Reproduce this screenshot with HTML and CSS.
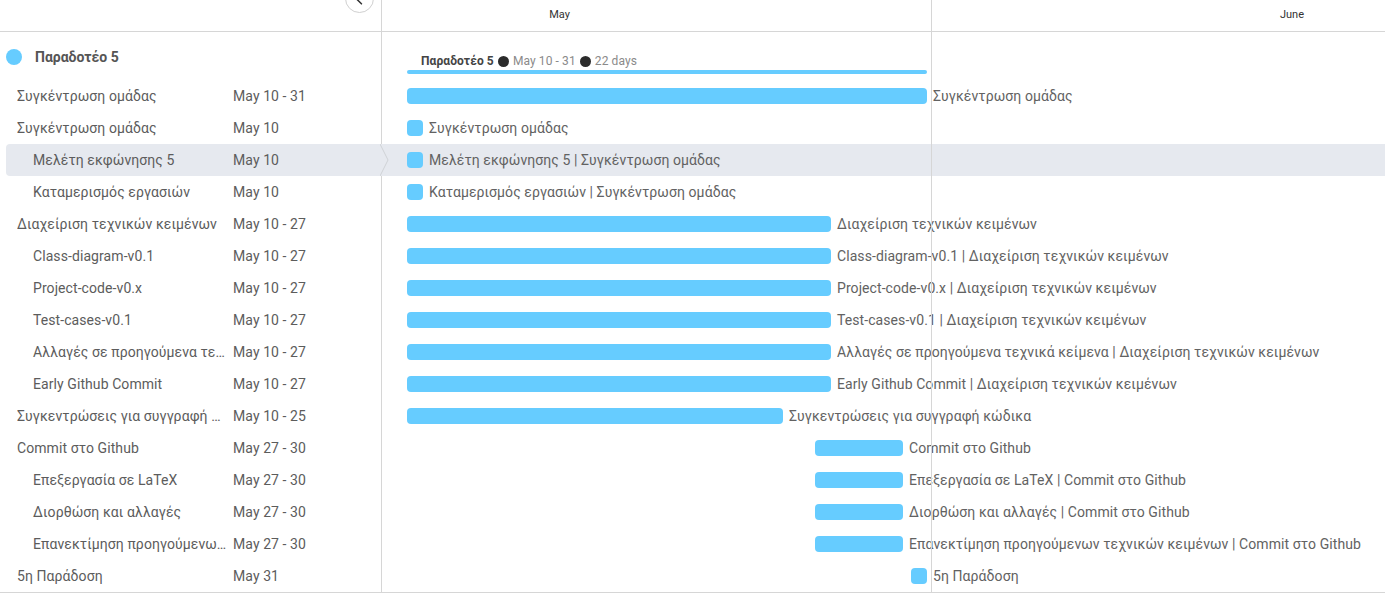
FILE: index.html
```html
<!DOCTYPE html>
<html lang="el">
<head>
<meta charset="utf-8">
<title>Gantt</title>
<link rel="stylesheet" href="styles.css">
</head>
<body>
<div class="gantt">
  <div class="header">
    <div class="header-left">
      <button class="collapse" aria-label="collapse">
        <svg width="28" height="28" viewBox="0 0 28 28"><polyline points="16,9 11,14 16,19" fill="none" stroke="#333" stroke-width="1.6" stroke-linecap="round" stroke-linejoin="round"/></svg>
      </button>
    </div>
    <div class="header-chart">
      <div class="months">
        <div class="month may">May</div>
        <div class="month june">June</div>
      </div>
    </div>
  </div>

  <div class="rows">
    <div class="row group">
      <div class="cell-left"><span class="dot"></span><span class="group-title">Παραδοτέο 5</span></div>
      <div class="cell-chart group-chart" style="padding-left:25px">
        <div class="summary"><b>Παραδοτέο 5</b> <span class="sep"></span> May 10 - 31 <span class="sep"></span> 22 days</div>
        <div class="summary-bar" style="width:520px"></div>
      </div>
    </div>

    <div class="row">
      <div class="cell-left"><span class="name">Συγκέντρωση ομάδας</span><span class="date">May 10 - 31</span></div>
      <div class="cell-chart" style="padding-left:25px"><span class="bar" style="width:520px"></span><span class="label">Συγκέντρωση ομάδας</span></div>
    </div>
    <div class="row">
      <div class="cell-left"><span class="name">Συγκέντρωση ομάδας</span><span class="date">May 10</span></div>
      <div class="cell-chart" style="padding-left:25px"><span class="milestone"></span><span class="label">Συγκέντρωση ομάδας</span></div>
    </div>
    <div class="row active">
      <div class="cell-left"><span class="name sub">Μελέτη εκφώνησης 5</span><span class="date">May 10</span>
        <svg class="pointer" width="10" height="32" viewBox="0 0 10 32"><polyline points="0,0 8,16 0,32" fill="none" stroke="#cfd2d6" stroke-width="1"/></svg>
      </div>
      <div class="cell-chart" style="padding-left:25px"><span class="milestone"></span><span class="label">Μελέτη εκφώνησης 5 | Συγκέντρωση ομάδας</span></div>
    </div>
    <div class="row">
      <div class="cell-left"><span class="name sub">Καταμερισμός εργασιών</span><span class="date">May 10</span></div>
      <div class="cell-chart" style="padding-left:25px"><span class="milestone"></span><span class="label">Καταμερισμός εργασιών | Συγκέντρωση ομάδας</span></div>
    </div>
    <div class="row">
      <div class="cell-left"><span class="name">Διαχείριση τεχνικών κειμένων</span><span class="date">May 10 - 27</span></div>
      <div class="cell-chart" style="padding-left:25px"><span class="bar" style="width:424px"></span><span class="label">Διαχείριση τεχνικών κειμένων</span></div>
    </div>
    <div class="row">
      <div class="cell-left"><span class="name sub">Class-diagram-v0.1</span><span class="date">May 10 - 27</span></div>
      <div class="cell-chart" style="padding-left:25px"><span class="bar" style="width:424px"></span><span class="label">Class-diagram-v0.1 | Διαχείριση τεχνικών κειμένων</span></div>
    </div>
    <div class="row">
      <div class="cell-left"><span class="name sub">Project-code-v0.x</span><span class="date">May 10 - 27</span></div>
      <div class="cell-chart" style="padding-left:25px"><span class="bar" style="width:424px"></span><span class="label">Project-code-v0.x | Διαχείριση τεχνικών κειμένων</span></div>
    </div>
    <div class="row">
      <div class="cell-left"><span class="name sub">Test-cases-v0.1</span><span class="date">May 10 - 27</span></div>
      <div class="cell-chart" style="padding-left:25px"><span class="bar" style="width:424px"></span><span class="label">Test-cases-v0.1 | Διαχείριση τεχνικών κειμένων</span></div>
    </div>
    <div class="row">
      <div class="cell-left"><span class="name sub">Αλλαγές σε προηγούμενα τεχνικά κείμενα</span><span class="date">May 10 - 27</span></div>
      <div class="cell-chart" style="padding-left:25px"><span class="bar" style="width:424px"></span><span class="label">Αλλαγές σε προηγούμενα τεχνικά κείμενα | Διαχείριση τεχνικών κειμένων</span></div>
    </div>
    <div class="row">
      <div class="cell-left"><span class="name sub">Early Github Commit</span><span class="date">May 10 - 27</span></div>
      <div class="cell-chart" style="padding-left:25px"><span class="bar" style="width:424px"></span><span class="label">Early Github Commit | Διαχείριση τεχνικών κειμένων</span></div>
    </div>
    <div class="row">
      <div class="cell-left"><span class="name">Συγκεντρώσεις για συγγραφή κώδικα</span><span class="date">May 10 - 25</span></div>
      <div class="cell-chart" style="padding-left:25px"><span class="bar" style="width:376px"></span><span class="label">Συγκεντρώσεις για συγγραφή κώδικα</span></div>
    </div>
    <div class="row">
      <div class="cell-left"><span class="name">Commit στο Github</span><span class="date">May 27 - 30</span></div>
      <div class="cell-chart" style="padding-left:433px"><span class="bar" style="width:88px"></span><span class="label">Commit στο Github</span></div>
    </div>
    <div class="row">
      <div class="cell-left"><span class="name sub">Επεξεργασία σε LaTeX</span><span class="date">May 27 - 30</span></div>
      <div class="cell-chart" style="padding-left:433px"><span class="bar" style="width:88px"></span><span class="label">Επεξεργασία σε LaTeX | Commit στο Github</span></div>
    </div>
    <div class="row">
      <div class="cell-left"><span class="name sub">Διορθώση και αλλαγές</span><span class="date">May 27 - 30</span></div>
      <div class="cell-chart" style="padding-left:433px"><span class="bar" style="width:88px"></span><span class="label">Διορθώση και αλλαγές | Commit στο Github</span></div>
    </div>
    <div class="row">
      <div class="cell-left"><span class="name sub">Επανεκτίμηση προηγούμενων τεχνικών κειμένων</span><span class="date">May 27 - 30</span></div>
      <div class="cell-chart" style="padding-left:433px"><span class="bar" style="width:88px"></span><span class="label">Επανεκτίμηση προηγούμενων τεχνικών κειμένων | Commit στο Github</span></div>
    </div>
    <div class="row">
      <div class="cell-left"><span class="name">5η Παράδοση</span><span class="date">May 31</span></div>
      <div class="cell-chart" style="padding-left:529px"><span class="milestone"></span><span class="label">5η Παράδοση</span></div>
    </div>
  </div>
</div>
</body>
</html>
```

FILE: styles.css
```css
* { box-sizing: border-box; }

html, body {
  margin: 0;
  padding: 0;
  background: #fff;
}

body {
  font-family: Roboto, "Noto Sans", "DejaVu Sans", sans-serif;
  font-size: 14px;
  font-weight: 400;
  letter-spacing: 0.08px;
  color: #5c5c5c;
  overflow: hidden;
  width: 1385px;
  height: 594px;
}

.gantt {
  position: relative;
  width: 1385px;
}

/* header */
.header {
  display: flex;
  height: 32px;
  border-bottom: 1px solid #d6d6d6;
}

.header-left {
  position: relative;
  width: 382px;
  flex: none;
  border-right: 1px solid #d6d6d6;
}

.collapse {
  position: absolute;
  left: 345px;
  top: -16px;
  width: 29px;
  height: 29px;
  padding: 0;
  margin: 0;
  border: 1px solid #d0d0d0;
  border-radius: 50%;
  background: #fff;
  display: flex;
  align-items: center;
  justify-content: center;
}

.collapse svg { display: block; }

.header-chart {
  flex: 1;
  overflow: hidden;
}

.months {
  display: flex;
  margin-left: -194px;
  height: 100%;
}

.month {
  flex: none;
  display: flex;
  align-items: center;
  justify-content: center;
  font-size: 11px;
  letter-spacing: 0;
  color: #333;
  padding-bottom: 3px;
}

.month.may {
  width: 744px;
  border-right: 1px solid #d6d6d6;
}

.month.june {
  width: 720px;
}

/* rows */
.rows {
  position: relative;
  border-bottom: 1px solid #d6d6d6;
}

.rows::after {
  content: "";
  position: absolute;
  left: 931px;
  top: 0;
  bottom: 0;
  width: 1px;
  background: #d6d6d6;
}

.row {
  display: flex;
  height: 32px;
  margin-left: 6px;
}

.row.group {
  height: 48px;
}

.row.active {
  background: #e6e9ef;
  border-radius: 4px 0 0 4px;
}

.cell-left {
  position: relative;
  flex: none;
  width: 376px;
  border-right: 1px solid #d6d6d6;
  display: flex;
  align-items: center;
  padding-left: 11px;
  white-space: nowrap;
}

.row.active .cell-left {
  border-right-color: transparent;
}

.pointer {
  position: absolute;
  right: -9px;
  top: 0;
}

.name {
  flex: none;
  width: 216px;
  padding-right: 5px;
  overflow: hidden;
  text-overflow: ellipsis;
  white-space: nowrap;
}

.name.sub {
  padding-left: 16px;
}

.date {
  flex: none;
}

.group .cell-left {
  padding-left: 0;
  padding-top: 2px;
}

.dot {
  width: 16px;
  height: 16px;
  border-radius: 50%;
  background: #66ccff;
  margin-right: 13px;
  flex: none;
}

.group-title {
  font-weight: 700;
  color: #555;
  letter-spacing: 0;
}

.cell-chart {
  flex: 1;
  display: flex;
  align-items: center;
  white-space: nowrap;
  overflow: hidden;
  color: #626262;
}

.group-chart {
  flex-direction: column;
  align-items: flex-start;
  justify-content: flex-end;
  padding-bottom: 6px;
}

.summary {
  font-size: 12px;
  line-height: 14px;
  color: #8a8a8a;
  padding-left: 14px;
  margin-bottom: 2px;
  display: flex;
  align-items: center;
  gap: 4px;
  letter-spacing: 0.1px;
}

.summary b {
  color: #444;
  font-weight: 700;
}

.sep {
  display: inline-block;
  width: 11px;
  height: 11px;
  border-radius: 50%;
  background: #2b2b2b;
}

.summary-bar {
  height: 4px;
  border-radius: 2px;
  background: #66ccff;
}

.bar {
  flex: none;
  height: 16px;
  border-radius: 4px;
  background: #66ccff;
}

.milestone {
  flex: none;
  width: 16px;
  height: 16px;
  border-radius: 4px;
  background: #66ccff;
}

.label {
  margin-left: 6px;
}
```
